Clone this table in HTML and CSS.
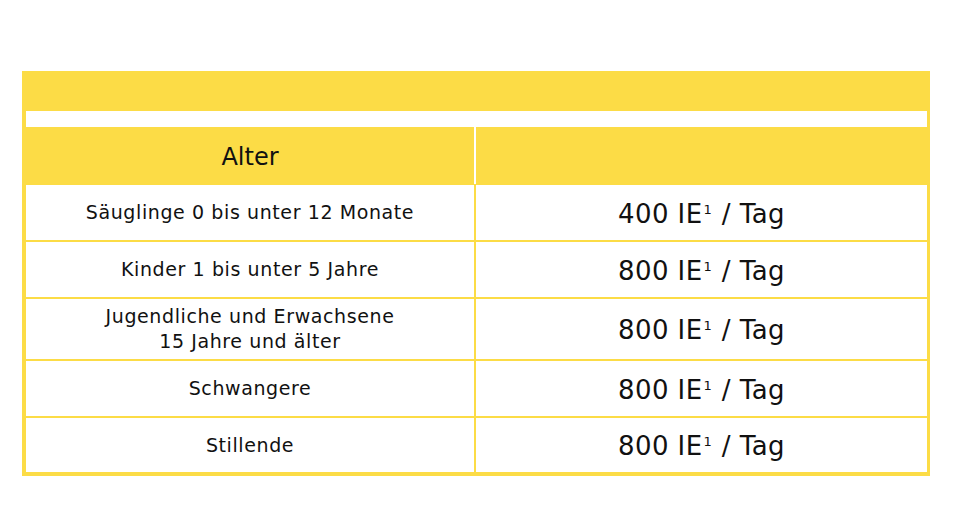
FILE: index.html
```html
<!DOCTYPE html>
<html lang="de">
<head>
<meta charset="utf-8">
<title>Vitamin D Zufuhr</title>
<link rel="stylesheet" href="styles.css">
</head>
<body>
<div class="frame">
  <div class="strip"></div>
  <div class="table">
    <div class="head">
      <div class="hcell">Alter</div>
      <div class="hcell"></div>
    </div>
    <div class="body">
      <div class="row r1"><div class="cell age">Säuglinge 0 bis unter 12 Monate</div><div class="cell dose"><span>400 IE<sup>1</sup> / Tag</span></div></div>
      <div class="row r2"><div class="cell age">Kinder 1 bis unter 5 Jahre</div><div class="cell dose"><span>800 IE<sup>1</sup> / Tag</span></div></div>
      <div class="row r3"><div class="cell age">Jugendliche und Erwachsene<br>15 Jahre und älter</div><div class="cell dose"><span>800 IE<sup>1</sup> / Tag</span></div></div>
      <div class="row r4"><div class="cell age">Schwangere</div><div class="cell dose"><span>800 IE<sup>1</sup> / Tag</span></div></div>
      <div class="row r5"><div class="cell age">Stillende</div><div class="cell dose"><span>800 IE<sup>1</sup> / Tag</span></div></div>
    </div>
  </div>
</div>
</body>
</html>
```

FILE: styles.css
```css
html, body {
  margin: 0;
  padding: 0;
  background: #ffffff;
}

body {
  font-family: "DejaVu Sans", "Open Sans", sans-serif;
  color: #111111;
}

.frame {
  margin: 71px 0 0 22px;
  width: 908px;
  box-sizing: border-box;
  background: #fcdc46;
  padding: 40px 3px 4px 4px;
}

.strip {
  height: 16px;
  background: #ffffff;
}

.head {
  display: grid;
  grid-template-columns: 448px 451px;
  column-gap: 2px;
  background: #ffffff;
}

.hcell {
  height: 57px;
  background: #fcdc46;
  display: flex;
  align-items: center;
  justify-content: center;
  font-size: 24px;
  padding-top: 2px;
  box-sizing: border-box;
}

.body {
  display: flex;
  flex-direction: column;
  row-gap: 2px;
  padding-top: 1px;
}

.row {
  display: grid;
  grid-template-columns: 448px 451px;
  column-gap: 2px;
}

.r1, .r2, .r4 { height: 55px; }
.r3 { height: 60px; }
.r5 { height: 54px; }

.cell {
  background: #ffffff;
  display: flex;
  align-items: center;
  justify-content: center;
  text-align: center;
}

.age {
  font-size: 19px;
  line-height: 25px;
  letter-spacing: 0.6px;
}

.dose {
  font-size: 26px;
  line-height: 30px;
  letter-spacing: 0.4px;
  padding-top: 2px;
}

.dose sup {
  font-size: 13px;
  line-height: 0;
  vertical-align: 9px;
  margin: 0 1px 0 1px;
}
```
